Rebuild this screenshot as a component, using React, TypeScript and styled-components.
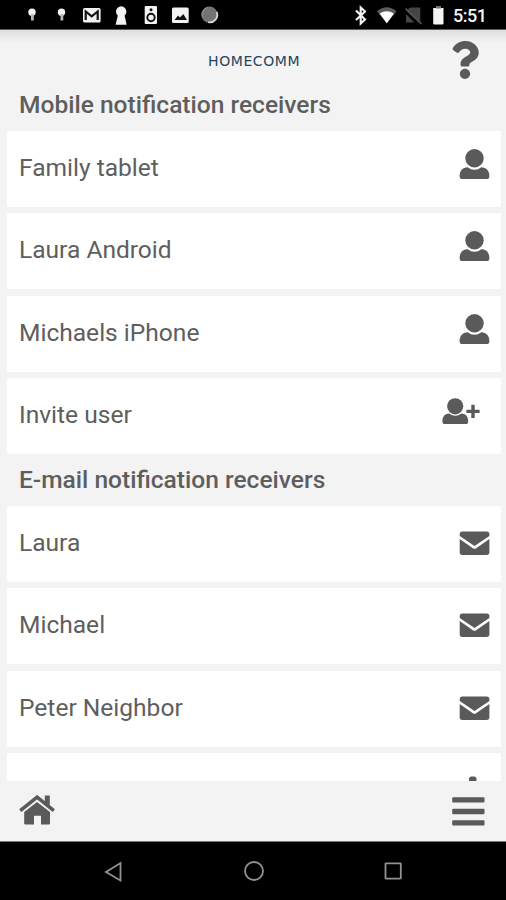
import React from 'react';
import styled, { createGlobalStyle } from 'styled-components';
import { FaQuestion } from 'react-icons/fa';

const GlobalStyle = createGlobalStyle`
  * { box-sizing: border-box; }
  body { margin: 0; background: #f3f3f3; font-family: Roboto, sans-serif; }
`;

const Screen = styled.div`
  width: 506px;
  height: 900px;
  display: flex;
  flex-direction: column;
  overflow: hidden;
  background: #f3f3f3;
  color: #5e5e5e;
`;

const StatusBar = styled.div`
  height: 30px;
  flex: none;
  display: flex;
  justify-content: space-between;
  background: #000;
  border-bottom: 1px solid #5c5c5c;
`;

const StatusGroup = styled.div`
  display: flex;
  height: 29px;
`;

const Clock = styled.time`
  width: 53px;
  font-size: 18px;
  font-weight: 500;
  line-height: 32px;
  letter-spacing: -0.5px;
  color: #f5f5f5;
`;

const Header = styled.header`
  height: 54px;
  flex: none;
  display: grid;
  grid-template-columns: 208px 1fr auto;
  padding: 11px 32px 0 0;
  background: linear-gradient(#dedede 0, #eaeaea 7px, #f3f3f3 14px);
`;

const Brand = styled.h1`
  grid-column: 2;
  margin: 0;
  font: 400 14px/18px 'DejaVu Sans', sans-serif;
  letter-spacing: 0.6px;
  padding-top: 11px;
  color: #27465c;
`;

const HelpButton = styled.button`
  border: 0;
  padding: 0;
  width: 28px;
  height: 38px;
  background: none;
  color: #5a5a5a;
  svg { display: block; }
`;

const List = styled.main`
  height: 697px;
  flex: none;
  overflow: hidden;
  padding: 0 5px 0 7px;
`;

const SectionTitle = styled.h2<{ $height: number; $lineHeight: number }>`
  margin: 0;
  height: ${(p) => p.$height}px;
  padding-left: 12px;
  font-size: 24.55px;
  font-weight: 500;
  line-height: ${(p) => p.$lineHeight}px;
`;

const Cards = styled.div`
  display: flex;
  flex-direction: column;
  gap: 6.5px;
`;

const Card = styled.div`
  height: 76px;
  flex: none;
  display: flex;
  justify-content: space-between;
  padding: 0 11px 0 12px;
  border-radius: 2px;
  background: #fff;
  font-size: 24.55px;
  line-height: 74px;
  svg { flex: none; display: block; }
`;

const BottomBar = styled.nav`
  height: 61px;
  flex: none;
  display: flex;
  justify-content: space-between;
  padding: 14px 21px 0 19px;
  border-bottom: 1px solid #777;
`;

const SystemBar = styled.footer`
  height: 58px;
  flex: none;
  background: #000;
  display: flex;
  justify-content: space-between;
  padding: 19px 102px 0 103px;
`;

const UserIcon = () => (
  <svg width="31" height="76" viewBox="0 0 31 76" fill="#5a5a5a">
    <circle cx="15.5" cy="27.3" r="9.2" />
    <path d="M.6 45.2c0-5.500 3-9 8.200-9 2 1.700 4.200 2.500 6.700 2.500s4.700-.8 6.700-2.500c5.200 0 8.200 3.500 8.200 9 0 2-.9 2.800-3 2.800H3.600c-2.100 0-3-.8-3-2.800Z" />
  </svg>
);

const InviteIcon = () => (
  <svg width="48" height="76" viewBox="0 0 48 76" fill="#5a5a5a">
    <circle cx="13.2" cy="28.3" r="8.1" />
    <path d="M.4 43.300c0-4.800 2.600-7.700 7-7.700 1.800 1.500 3.600 2.200 5.900 2.200s4.100-.7 5.900-2.200c4.400 0 7 2.900 7 7.700 0 2-.8 2.800-2.700 2.800H3.100C1.200 46.100.4 45.300.4 43.300Z" />
    <path d="M29.300 26.700h3.400v5h4.900v3.200h-4.900v5.100h-3.400v-5.100h-4.900v-3.200h4.900Z" />
  </svg>
);

const MailIcon = () => (
  <svg width="31" height="76" viewBox="0 0 31 76" fill="#5a5a5a">
    <path d="M3.300 25.500h24.400q2.700 0 2.700 2.700v1.700L15.500 40.100.7 29.900v-1.700q0-2.700 2.600-2.700Z" />
    <path d="m.7 33.100 13.200 9.200q1.600 1.100 3.200 0l13.300-9.200v13.100q0 2.700-2.700 2.700H3.300q-2.600 0-2.600-2.700Z" />
  </svg>
);

const AddIcon = () => (
  <svg width="31" height="76" viewBox="0 0 31 76" fill="#5a5a5a">
    <path d="M10 39V26q0-2.500 2.500-2.500h2.500q2.500 0 2.500 2.500v13Z" />
  </svg>
);

const Notifications = () => (
  <svg width="225" height="29" viewBox="0 0 225 29" fill="#f2f2f2">
    {[32, 61.5].map((x) => (
      <g key={x}>
        <circle cx={x} cy="12.3" r="3.7" />
        <path d={`M${x - 1} 14h2.800v6.500h-2.800Z`} fill="#b8b8b8" />
      </g>
    ))}
    <rect x="83" y="8" width="17.6" height="14.6" rx="1.5" />
    <path d="M85.700 20v-8.500l6 4.800 6-4.800V20" fill="none" stroke="#111" strokeWidth="2.200" />
    <path d="M117.800 15.500a5.200 5.200 0 1 1 6.800 0l2 9.300h-11Z" />
    <rect x="144.7" y="6" width="12.3" height="18" rx="1" />
    <circle cx="151" cy="9.7" r="1.5" fill="#111" />
    <circle cx="151" cy="17.5" r="3.7" fill="none" stroke="#111" strokeWidth="1.9" />
    <rect x="172" y="7.5" width="16.7" height="15.5" rx="1.5" />
    <path d="m174.500 20 3.500-4.500 2 2 3.300-3.500 3.700 6Z" fill="#111" />
    <circle cx="209.5" cy="14.7" r="8.2" fill="#737373" />
    <path d="M216.700 12a7.500 7.500 0 0 1-8.500 10.200" fill="none" stroke="#d5d5d5" strokeWidth="1.8" />
    <path d="M202.500 17a7.500 7.500 0 0 1 5-9.500" fill="none" stroke="#969696" />
  </svg>
);

const SystemStatus = () => (
  <svg width="98" height="29" viewBox="355 0 98 29" fill="#f4f4f4">
    <path d="m356 10.500 9 9-4.300 4V7.500l4.300 4-9 8.500" fill="none" stroke="#f2f2f2" strokeWidth="2.1" />
    <path d="M377 11.300q9.800-8.300 19.500 0l-9.700 12.200Z" fill="#5b5b5b" />
    <path d="M379.700 13.500q7-4.500 14.200 0l-7.100 9.700Z" fill="#fff" />
    <path d="M410.500 7.500h9.800v15h-1.500L406 10.500ZM406 14l8.500 8.500H406Z" fill="#454545" />
    <path d="m405.500 8.500 16 15.500" stroke="#555" strokeWidth="1.7" />
    <path d="M433.200 8h10.300v15.300q0 1.200-1.200 1.200h-8q-1.100 0-1.100-1.200Z" />
    <rect x="436" y="6" width="5" height="2.5" fill="#777" />
  </svg>
);

const HomeIcon = () => (
  <svg width="37" height="31" viewBox="19 795 37 31" fill="#5a5a5a">
    <path d="M24.200 811.900 37 802l13 9.900v11.300q0 1.300-1.300 1.300H41v-8.800h-7v8.800h-8.500q-1.300 0-1.300-1.300Z" />
    <path d="m20.300 810.700 16.800-13.500L53.800 810.700" fill="none" stroke="#5a5a5a" strokeWidth="3.6" />
    <path d="M44.800 795.500h5v10.500l-5-4.200Z" />
  </svg>
);

const MenuIcon = () => (
  <svg width="33" height="32" viewBox="0 0 33 32" fill="#5a5a5a">
    {[2.2, 13.8, 25.2].map((y) => (
      <rect key={y} x="0.2" y={y} width="32.3" height="5.4" rx="1" />
    ))}
  </svg>
);

const mobileReceivers = ['Family tablet', 'Laura Android', 'Michaels iPhone'];
const emailReceivers = ['Laura', 'Michael', 'Peter Neighbor'];

export default function App() {
  return (
    <Screen>
      <GlobalStyle />
      <StatusBar>
        <StatusGroup><Notifications /></StatusGroup>
        <StatusGroup>
          <SystemStatus />
          <Clock>5:51</Clock>
        </StatusGroup>
      </StatusBar>
      <Header>
        <Brand>HOMECOMM</Brand>
        <HelpButton aria-label="Help"><FaQuestion size={38} /></HelpButton>
      </Header>
      <List>
        <SectionTitle $height={46.6} $lineHeight={42}>Mobile notification receivers</SectionTitle>
        <Cards>
          {mobileReceivers.map((name) => (
            <Card key={name}><span>{name}</span><UserIcon /></Card>
          ))}
          <Card><span>Invite user</span><InviteIcon /></Card>
        </Cards>
        <SectionTitle $height={51.9} $lineHeight={51}>E-mail notification receivers</SectionTitle>
        <Cards>
          {emailReceivers.map((name) => (
            <Card key={name}><span>{name}</span><MailIcon /></Card>
          ))}
          <Card><span /><AddIcon /></Card>
        </Cards>
      </List>
      <BottomBar>
        <HomeIcon />
        <MenuIcon />
      </BottomBar>
      <SystemBar>
        <svg width="20" height="22" viewBox="0 0 20 22" fill="none" stroke="#929292" strokeWidth="1.8">
          <path d="M17.500 2v17.500L3 11Z" />
        </svg>
        <svg width="22" height="22" viewBox="0 0 22 22" fill="none" stroke="#929292" strokeWidth="1.8">
          <circle cx="11" cy="10" r="9" />
        </svg>
        <svg width="20" height="22" viewBox="0 0 20 22" fill="none" stroke="#929292" strokeWidth="1.8">
          <rect x="1.5" y="2.3" width="15.3" height="15.3" rx="0.5" />
        </svg>
      </SystemBar>
    </Screen>
  );
}
